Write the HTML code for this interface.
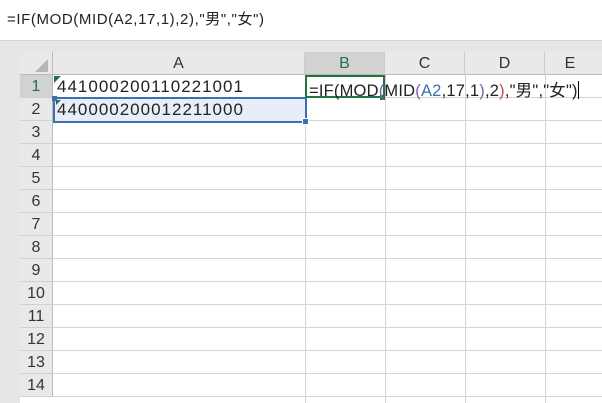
<!DOCTYPE html><html><head><style>
body{margin:0;width:602px;height:403px;overflow:hidden;background:#e6e6e6;font-family:"Liberation Sans","Noto Sans CJK SC",sans-serif;position:relative}
.fb{position:absolute;left:0;top:0;width:602px;height:40px;background:#fff;border-bottom:1px solid #d4d4d4;font-size:15px;letter-spacing:0.6px;line-height:40px;text-indent:7px;color:#222}
.g{position:absolute;left:20px;top:52px;width:582px;height:351px;background:#fff}
.hd{position:absolute;background:#e9e9e9;color:#333;font-size:16px;text-align:center;box-sizing:border-box}
.hl{position:absolute;background:#d4d4d4}
.t{position:absolute;font-size:17px;letter-spacing:1px;color:#222;white-space:nowrap}
</style></head><body>
<div class="fb">=IF(MOD(MID(A2,17,1),2),"男","女")</div>
<div class="g"></div>
<div class="hd" style="left:20px;top:52px;width:33px;height:23px;border-right:1px solid #bbb;border-bottom:1px solid #bbb"><svg width="33" height="23" style="position:absolute;left:0;top:0"><polygon points="28,7 28,20 15,20" fill="#b5b5b5"/></svg></div>
<div class="hd" style="left:53px;top:52px;width:252px;height:23px;line-height:23px;border-right:1px solid #ccc;border-bottom:1px solid #bbb">A</div>
<div class="hd" style="left:305px;top:52px;width:80px;height:23px;line-height:23px;background:#d2d2d2;color:#217346;border-right:1px solid #ccc;border-bottom:1px solid #bbb">B</div>
<div class="hd" style="left:385px;top:52px;width:80px;height:23px;line-height:23px;border-right:1px solid #ccc;border-bottom:1px solid #bbb">C</div>
<div class="hd" style="left:465px;top:52px;width:80px;height:23px;line-height:23px;border-right:1px solid #ccc;border-bottom:1px solid #bbb">D</div>
<div class="hd" style="left:545px;top:52px;width:80px;height:23px;line-height:23px;border-bottom:1px solid #bbb;text-indent:-30px">E</div>
<div id="rows"></div>
<script>
var h='';for(var i=1;i<=14;i++){var y=75+(i-1)*23;
h+='<div class="hd" style="left:20px;top:'+y+'px;width:33px;height:23px;line-height:23px;border-right:1px solid #bbb;border-bottom:1px solid #d0d0d0;'+(i==1?'background:#d2d2d2;color:#217346;':'')+'">'+i+'</div>';
h+='<div class="hl" style="left:53px;top:'+(y+22)+'px;width:549px;height:1px"></div>';}
[305,385,465,545].forEach(function(x){h+='<div class="hl" style="left:'+x+'px;top:75px;width:1px;height:328px"></div>'});
document.getElementById('rows').innerHTML=h;
</script>
<div style="position:absolute;left:54px;top:98px;width:251px;height:23px;background:#e8eef8"></div>
<div style="position:absolute;left:53px;top:97px;width:250px;height:22px;border:2px solid #3e6fb3;box-sizing:content-box"></div>
<div style="position:absolute;left:302px;top:118px;width:5px;height:5px;background:#3e6fb3;border:1px solid #fff"></div>
<div style="position:absolute;left:52px;top:96px;width:5px;height:5px;background:#3e6fb3"></div>
<svg style="position:absolute;left:54px;top:76px" width="8" height="8"><polygon points="0,0 7,0 0,7" fill="#217346"/></svg>
<svg style="position:absolute;left:56px;top:100px" width="6" height="6"><polygon points="0,0 5,0 0,5" fill="#217346"/></svg>
<div class="t" style="left:57px;top:77px">441000200110221001</div>
<div class="t" style="left:57px;top:100px">440000200012211000</div>
<div style="position:absolute;left:305px;top:75px;width:76px;height:19px;border:2px solid #217346"></div>
<div style="position:absolute;left:380px;top:95px;width:5px;height:5px;background:#217346"></div>
<div class="t" style="left:309px;top:77px;font-size:16.5px;letter-spacing:0.2px">=IF(MOD<span style="color:#7f5fb0">(</span>MID<span style="color:#7f5fb0">(</span><span style="color:#3e6fb3">A2</span>,17,1<span style="color:#7f5fb0">)</span>,2<span style="color:#c0504d">)</span>,"男","女")<span style="display:inline-block;width:1px;height:18px;background:#000;vertical-align:-3px"></span></div>
</body></html>
